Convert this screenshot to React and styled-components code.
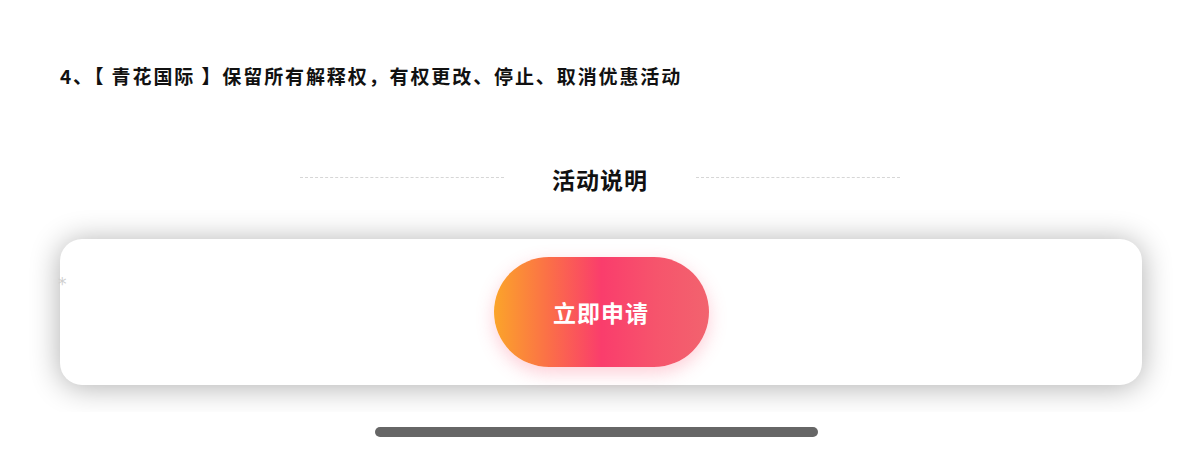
import React from "react";
import styled, { createGlobalStyle } from "styled-components";

const GlobalStyle = createGlobalStyle`
  body {
    margin: 0;
    background: #fff;
    font-family: "Noto Sans CJK SC", "Noto Sans", sans-serif;
  }
`;

const Page = styled.div`
  width: 1200px;
  height: 459px;
  overflow: hidden;
  display: flex;
  flex-direction: column;
`;

const Notice = styled.p`
  margin: 64px 0 0 60px;
  font-size: 19px;
  line-height: 24px;
  font-weight: 700;
  letter-spacing: 1.9px;
  color: #111;
`;

const SectionHeader = styled.div`
  margin-top: 76px;
  display: flex;
  align-items: center;
  justify-content: center;
  gap: 48px;
  height: 30px;
`;

const DashLine = styled.span`
  width: 204px;
  border-top: 1px dashed #d6d6d6;
  margin-top: -3px;
`;

const SectionTitle = styled.h2`
  margin: 0;
  font-size: 23px;
  line-height: 30px;
  font-weight: 700;
  letter-spacing: 1px;
  color: #111;
`;

const FooterWrap = styled.div`
  margin-top: 15px;
  padding: 30px 58px 27px 60px;
  overflow: hidden;
`;

const Card = styled.div`
  position: relative;
  height: 146px;
  background: #fff;
  border-radius: 22px;
  box-shadow: 0 2px 30px rgba(0, 0, 0, 0.32);
  display: flex;
  align-items: center;
  justify-content: center;
`;

const Star = styled.span`
  position: absolute;
  left: -2px;
  top: 35px;
  font-family: "DejaVu Sans", sans-serif;
  font-size: 17px;
  line-height: 20px;
  color: #cfcfcf;
`;

const ApplyButton = styled.button`
  width: 215px;
  height: 110px;
  border: none;
  border-radius: 55px;
  background: linear-gradient(90deg, #fba42a 0%, #fb7047 25%, #fa3d6c 50%, #f6546c 75%, #f2636e 100%);
  box-shadow: 0 6px 18px rgba(250, 80, 110, 0.28);
  color: #fff;
  font-family: inherit;
  font-size: 23px;
  font-weight: 700;
  letter-spacing: 1px;
  cursor: pointer;
`;

const HomeBar = styled.div`
  margin: 15px 0 0 375px;
  width: 443px;
  height: 10px;
  border-radius: 5px;
  background: #666;
`;

export default function App() {
  return (
    <>
      <GlobalStyle />
      <Page>
        <Notice>4、【 青花国际 】保留所有解释权，有权更改、停止、取消优惠活动</Notice>
        <SectionHeader>
          <DashLine />
          <SectionTitle>活动说明</SectionTitle>
          <DashLine />
        </SectionHeader>
        <FooterWrap>
          <Card>
            <Star>*</Star>
            <ApplyButton>立即申请</ApplyButton>
          </Card>
        </FooterWrap>
        <HomeBar />
      </Page>
    </>
  );
}
